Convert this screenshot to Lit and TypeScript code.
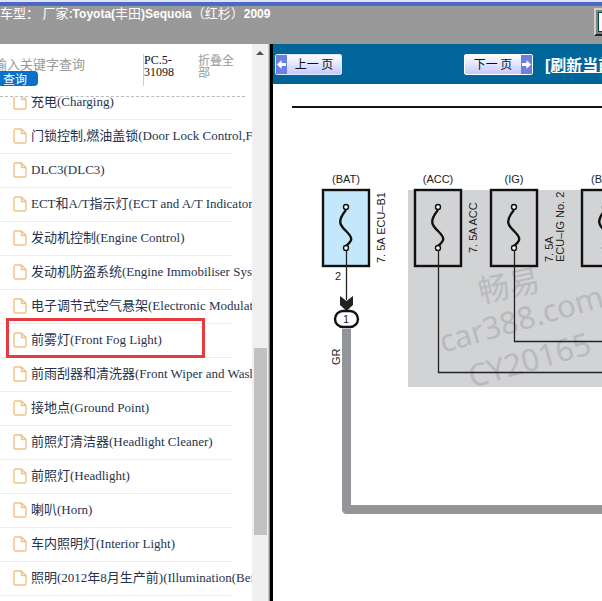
import { LitElement, html, css, svg } from "lit";
import { customElement, state } from "lit/decorators.js";

const ITEMS = [
  "充电(Charging)",
  "门锁控制,燃油盖锁(Door Lock Control,Fuel Lid)",
  "DLC3(DLC3)",
  "ECT和A/T指示灯(ECT and A/T Indicator)",
  "发动机控制(Engine Control)",
  "发动机防盗系统(Engine Immobiliser System)",
  "电子调节式空气悬架(Electronic Modulated Air Suspension)",
  "前雾灯(Front Fog Light)",
  "前雨刮器和清洗器(Front Wiper and Washer)",
  "接地点(Ground Point)",
  "前照灯清洁器(Headlight Cleaner)",
  "前照灯(Headlight)",
  "喇叭(Horn)",
  "车内照明灯(Interior Light)",
  "照明(2012年8月生产前)(Illumination(Before Aug. 2012))",
];

@customElement("top-bar")
class TopBar extends LitElement {
  static styles = css`
    :host {
      display: block;
      flex: none;
      background: #999;
      border-top: 2px solid #dfe5f7;
    }
    .line {
      height: 4px;
      background: #4c69c6;
    }
    .row {
      display: flex;
      justify-content: space-between;
      align-items: flex-start;
      height: 38px;
      overflow: hidden;
    }
    h1 {
      margin: 0;
      font: bold 12px/16px "Liberation Sans", "Noto Sans CJK SC", sans-serif;
      color: #fff;
      white-space: nowrap;
    }
    .cjk {
      font-size: 13px;
      font-weight: normal;
    }
    button {
      width: 40px;
      height: 28px;
      margin: 2px -32px 0 0;
      padding: 0;
      flex: none;
      border: 2px solid;
      border-color: #d4d0c8 #222 #222 #d4d0c8;
      background: #808080;
    }
    .page {
      display: block;
      width: 20px;
      height: 18px;
      margin-left: 2px;
      border: 1px solid #044;
      background: #fff;
    }
  `;
  render() {
    return html`
      <div class="line"></div>
      <div class="row">
        <h1>
          <span class="cjk">车型： 厂家</span>:Toyota(<span class="cjk">丰田</span>)Sequoia<span class="cjk">（红杉）</span>2009
        </h1>
        <button aria-label="Window"><span class="page"></span></button>
      </div>
    `;
  }
}

@customElement("side-nav")
class SideNav extends LitElement {
  @state() selected = 7;

  static styles = css`
    :host {
      display: flex;
      flex: none;
      width: 268px;
      min-height: 0;
      background: #fff;
      font-family: "Liberation Serif", "Noto Sans CJK SC", serif;
    }
    .content {
      flex: 1;
      min-width: 0;
      display: flex;
      flex-direction: column;
      overflow: hidden;
    }
    .search {
      flex: none;
      display: flex;
      height: 52px;
      margin-right: 7px;
      border-bottom: 1px dashed #bbb;
      font-size: 12px;
      line-height: 12px;
    }
    .query {
      width: 143px;
      padding-top: 12px;
      box-sizing: border-box;
      display: flex;
      flex-direction: column;
      align-items: flex-start;
    }
    input {
      width: 100%;
      height: 15px;
      margin: 0;
      padding: 0;
      border: 0;
      outline: 0;
      text-indent: -6px;
      font: 13px/15px "Noto Sans CJK SC", sans-serif;
    }
    input::placeholder {
      color: #999;
    }
    .query button {
      height: 15px;
      width: 38px;
      padding: 0 0 0 3px;
      border: 0;
      border-radius: 0 4px 4px 0;
      background: #0a70c8;
      color: #fff;
      text-align: left;
      font: 12px/14px "Noto Sans CJK SC", sans-serif;
    }
    .code {
      width: 55px;
      height: 32px;
      margin-top: 10px;
      box-sizing: border-box;
      border-left: 1px solid #ccc;
      color: #111;
    }
    .fold {
      width: 40px;
      margin-top: 11px;
      color: #999;
      text-decoration: none;
    }
    .list {
      flex: 1;
      min-height: 0;
      overflow: hidden;
    }
    ul {
      margin: -11px 0 0;
      padding: 0;
      list-style: none;
    }
    li {
      height: 34px;
      position: relative;
      white-space: nowrap;
    }
    li::after {
      content: "";
      display: block;
      height: 1px;
      margin-right: 20px;
      background: #efefef;
    }
    a.item {
      display: flex;
      align-items: center;
      gap: 4px;
      height: 33px;
      padding: 0 0 2px 13px;
      box-sizing: border-box;
      font-size: 13px;
      line-height: 31px;
      color: #24344e;
      text-decoration: none;
    }
    a.item svg {
      flex: none;
      width: 14px;
      height: 16px;
      fill: none;
      stroke: #f3c184;
      stroke-width: 1.4;
      stroke-linejoin: round;
    }
    .selected::before {
      content: "";
      position: absolute;
      left: 6px;
      right: 47px;
      top: -6px;
      bottom: 0;
      border: 3px solid #e63a3f;
      pointer-events: none;
    }
    .scroll {
      flex: none;
      width: 16px;
      display: flex;
      flex-direction: column;
      align-items: center;
      background: #f0f0f0;
    }
    .arrow {
      margin-top: 7px;
      border: 4px solid transparent;
      border-top: 0;
      border-bottom: 4px solid #505050;
    }
    .before {
      flex: 294;
    }
    .thumb {
      flex: 187;
      width: 13px;
      background: #c1c1c1;
    }
    .after {
      flex: 66;
    }
  `;

  render() {
    return html`
      <div class="content">
        <form class="search" @submit=${(e: Event) => e.preventDefault()}>
          <div class="query">
            <input type="text" aria-label="关键字" placeholder="输入关键字查询" />
            <button>查询</button>
          </div>
          <div class="code">PC.5-<br />31098</div>
          <a class="fold" href="#">折叠全部</a>
        </form>
        <nav class="list">
          <ul>
            ${ITEMS.map(
              (t, i) => html`<li class=${i === this.selected ? "selected" : ""}>
                <a class="item" href="#" @click=${() => (this.selected = i)}>
                  <svg viewBox="0 0 14 16" aria-hidden="true">
                    <path d="M2.5 1H8.5L13 5.5V13.5Q13 15 11.5 15H2.5Q1 15 1 13.5V2.5Q1 1 2.5 1ZM8.5 1V5.5H13" />
                  </svg>
                  <span>${t}</span>
                </a>
              </li>`
            )}
          </ul>
        </nav>
      </div>
      <div class="scroll">
        <span class="arrow"></span>
        <span class="before"></span>
        <span class="thumb"></span>
        <span class="after"></span>
      </div>
    `;
  }
}

const fuse = (x: number, name: string, fill: string) => svg`
  <text class="label" x=${x + 24} y="99" text-anchor="middle">${name}</text>
  <rect x=${x + 1} y="106" width="46" height="76" fill=${fill} stroke="#111" stroke-width="2.4" />
  <path class="wave" d="M${x + 24} 126C${x + 14} 138 ${x + 19} 142 ${x + 24} 147C${x + 31} 154 ${x + 31} 156 ${x + 24} 162" />
  <circle class="pin" cx=${x + 24} cy="123" r="2.5" />
  <circle class="pin" cx=${x + 24} cy="164" r="2.5" />`;

@customElement("wiring-diagram")
class WiringDiagram extends LitElement {
  static styles = css`
    :host {
      display: block;
      flex: 1;
      min-height: 0;
      overflow: hidden;
      background: #fff;
    }
    svg {
      display: block;
      font-family: "Liberation Sans", "Noto Sans CJK SC", sans-serif;
      fill: #222;
    }
    .label {
      font-size: 11px;
    }
    .wave {
      fill: none;
      stroke: #111;
      stroke-width: 2.4;
    }
    .pin {
      fill: #fff;
      stroke: #111;
      stroke-width: 1.4;
    }
    .wire {
      fill: none;
      stroke: #222;
      stroke-width: 1.3;
    }
    .mark {
      font-family: "Noto Sans", "Noto Sans CJK SC", sans-serif;
      fill: #b9babd;
      font-size: 31px;
    }
  `;
  render() {
    return html`<svg width="800" height="800" role="img" aria-label="Wiring diagram">
      <rect x="19" y="22" width="781" height="2" fill="#111" />
      <rect x="135" y="106" width="665" height="197" fill="#d2d3d5" />
      <g class="mark">
        <text transform="translate(208 219) rotate(-12)">畅易</text>
        <text transform="translate(170 269) rotate(-16)">car388.com</text>
        <text transform="translate(199 304) rotate(-16)">CY20165</text>
      </g>
      ${fuse(49, "(BAT)", "#c3e8fb")} ${fuse(141, "(ACC)", "#d2d3d5")}
      ${fuse(217, "(IG)", "#d2d3d5")} ${fuse(308, "(BAT)", "#d2d3d5")}
      <path class="wire" d="M73.5 166V216M165.5 166V288.5H800M241.5 166V257.5H800" />
      <path d="M67 212L73.5 217L80 212V221L73.5 227L67 221Z" />
      <path d="M73.5 245V425.5H800" fill="none" stroke="#949599" stroke-width="9" stroke-linejoin="round" />
      <rect x="62" y="227" width="23" height="16" rx="8" fill="#fff" stroke="#111" stroke-width="2.4" />
      <g class="label">
        <text x="73" y="239" text-anchor="middle">1</text>
        <text x="62" y="196">2</text>
        <text transform="translate(112 179) rotate(-90)">7. 5A ECU–B1</text>
        <text transform="translate(204 169) rotate(-90)">7. 5A ACC</text>
        <text transform="translate(280 178) rotate(-90)">7. 5A</text>
        <text transform="translate(291 178) rotate(-90)">ECU–IG No. 2</text>
        <text transform="translate(67 281) rotate(-90)">GR</text>
      </g>
    </svg>`;
  }
}

@customElement("pager-bar")
class PagerBar extends LitElement {
  static styles = css`
    :host {
      display: flex;
      flex: none;
      height: 40px;
      box-sizing: border-box;
      padding: 10px 0 0 2px;
      align-items: flex-start;
      overflow: hidden;
      background: #069;
      color: #fff;
      font-family: "Liberation Sans", "Noto Sans CJK SC", sans-serif;
    }
    button {
      display: flex;
      flex: none;
      align-items: stretch;
      width: 67px;
      height: 21px;
      padding: 0;
      border: 1px solid #dfe3ff;
      border-radius: 2px;
      background: linear-gradient(#fff, #c3caff);
      color: #111;
      font: 12px/18px "Noto Sans CJK SC", sans-serif;
    }
    button span {
      flex: 1;
      text-align: center;
      white-space: nowrap;
    }
    button svg {
      flex: none;
      width: 11px;
      height: 19px;
      background: #6d7fe0;
      fill: #fff;
    }
    .next {
      margin-left: 122px;
      width: 69px;
      border-color: #fff;
    }
    a {
      margin-left: 12px;
      font: bold 16px/24px "Liberation Sans", "Noto Sans CJK SC", sans-serif;
      color: #fff;
      white-space: nowrap;
    }
  `;
  render() {
    return html`
      <button>
        <svg viewBox="0 0 11 19"><path d="M1 9.5L5.5 5V8H10V11H5.5V14Z" /></svg><span>上一 页</span>
      </button>
      <button class="next">
        <span>下一 页</span><svg viewBox="0 0 11 19"><path d="M10 9.5L5.5 5V8H1V11H5.5V14Z" /></svg>
      </button>
      <a href="#">[刷新当前页]</a>
    `;
  }
}

@customElement("app-root")
class AppRoot extends LitElement {
  static styles = css`
    :host {
      display: flex;
      flex-direction: column;
      height: 100vh;
      overflow: hidden;
    }
    .body {
      flex: 1;
      min-height: 0;
      display: flex;
    }
    .split {
      flex: none;
      width: 1px;
      background: #888;
      border-left: 1px solid #ccc;
      border-right: 3px solid #000;
    }
    main {
      flex: 1;
      min-width: 0;
      display: flex;
      flex-direction: column;
    }
  `;
  render() {
    return html`
      <top-bar></top-bar>
      <div class="body">
        <side-nav></side-nav>
        <div class="split"></div>
        <main>
          <pager-bar></pager-bar>
          <wiring-diagram></wiring-diagram>
        </main>
      </div>
    `;
  }
}
